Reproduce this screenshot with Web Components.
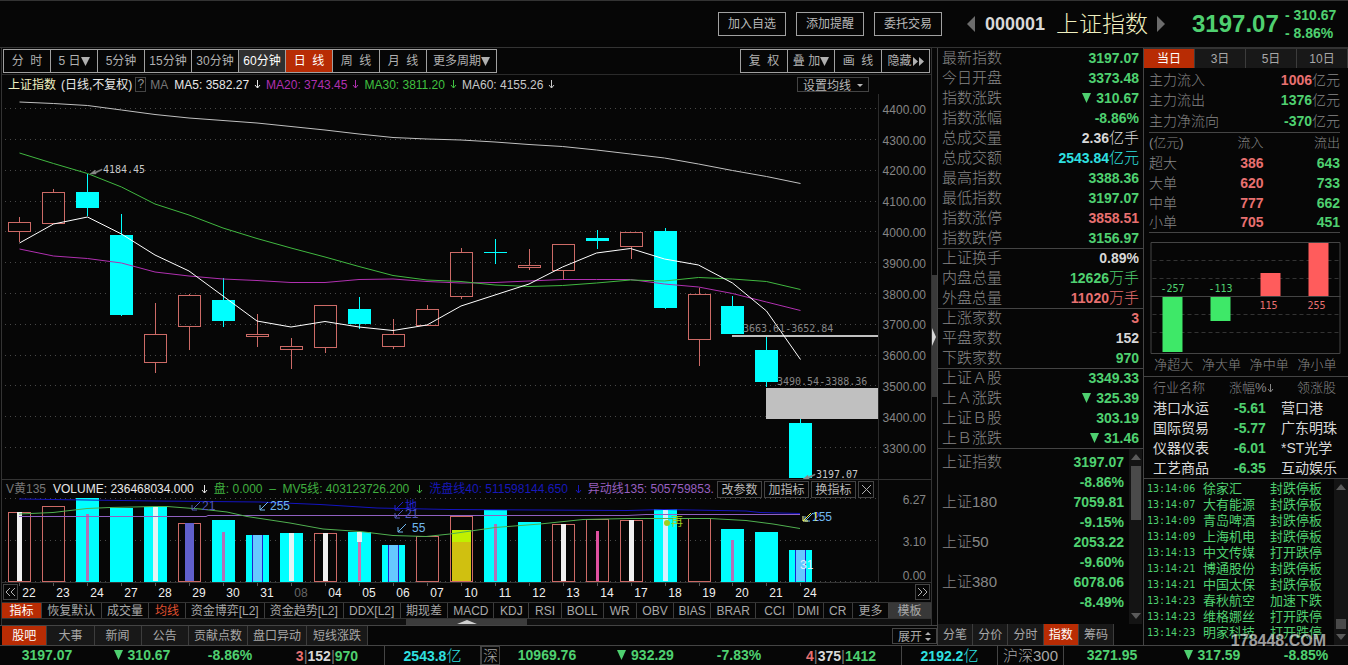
<!DOCTYPE html>
<html lang="zh-CN">
<head>
<meta charset="utf-8">
<title>上证指数 000001</title>
<style>
html{background:#060606}
body{margin:0;background:#060606;color:#a8a8a8;font:12px/16px "Liberation Sans","Noto Sans CJK SC",sans-serif;
--line:#333;--dim:#868686;--up:#e87070;--down:#4fd070;--cyan:#2fe0e0;--hot:#b82c04;--white:#d8d8d8}
</style>
</head>
<body>
<stock-app></stock-app>
<script>
const RESET = `*{box-sizing:border-box}
button{font:inherit;color:inherit;background:none;border:0;border-radius:0;padding:0;margin:0;white-space:nowrap;line-height:16px}
table{border-collapse:collapse;border-spacing:0}td,th{padding:0;font-weight:normal;white-space:nowrap}
ul{list-style:none;margin:0;padding:0}b{font-weight:700}
.up{color:var(--up)}.down{color:var(--down)}.cyan{color:var(--cyan)}.flat{color:var(--white)}
svg{display:block}`;

class Widget extends HTMLElement {
  connectedCallback() {
    if (this.shadowRoot) return;
    this.attachShadow({ mode: 'open' });
    this.shadowRoot.innerHTML = `<style>${RESET}${this.css()}</style>${this.html()}`;
    this.ready();
  }
  css() { return ':host{display:block}'; }
  html() { return ''; }
  ready() {}
}

/* Outlined push button; its caption is slotted */
customElements.define('tool-button', class extends Widget {
  css() { return `:host{display:block}
    button{width:100%;height:100%;padding:0 var(--pad,0);border:1px solid var(--edge,#a0a0a0);background:var(--fill,none)}`; }
  html() { return '<button type="button"><slot></slot></button>'; }
});

/* Row of tabs; items="label:weight|..." */
customElements.define('tab-strip', class extends Widget {
  css() { return `:host{display:block}
    nav{display:flex;height:100%}
    button{flex:var(--w) 1 0;min-width:0;border-right:1px solid #3c3c3c;background:var(--tab,none);overflow:hidden}
    button.on{background:var(--hot);color:#fff}
    button.hot{color:#e05030}
    button.box{background:#383838}`; }
  html() {
    const on = this.getAttribute('active');
    return '<nav>' + this.getAttribute('items').split('|').map(s => {
      const [t, w, c] = s.split(':');
      return `<button type="button" style="--w:${w}" class="${t === on ? 'on' : c || ''}">${t}</button>`;
    }).join('') + '</nav>';
  }
});

customElements.define('top-bar', class extends Widget {
  css() { return `:host{display:flex;justify-content:flex-end;align-items:center;height:48px;padding-right:11px;
      border-top:1px solid #333;border-bottom:1px solid var(--line)}
    .acts{display:flex;gap:10px;margin-right:25px;color:#b8b8b8}
    tool-button{width:68px;height:24px}
    .pick{display:flex;align-items:center}
    .pick svg{fill:#6c6c6c}
    b{font-size:18px;margin:0 11px 0 10px;color:#d8d8d8}
    h1{font-weight:300;font-size:23px;line-height:32px;margin:0 9px 0 0;color:#f0f0c0}
    strong{font-size:24px;margin:0 7px 0 27px;color:var(--down);width:86px}
    .chg{font:bold 14px/18px "Liberation Sans";color:var(--down);width:52px;white-space:nowrap}`; }
  html() { return `<div class="acts"><tool-button>加入自选</tool-button><tool-button>添加提醒</tool-button><tool-button>委托交易</tool-button></div>
    <div class="pick"><button type="button" aria-label="上一只"><svg width="8" height="16"><path d="M8 0v16L0 8z"/></svg></button><b>000001</b>
    <h1>上证指数</h1><button type="button" aria-label="下一只"><svg width="8" height="16"><path d="M0 0v16l8-8z"/></svg></button></div>
    <strong>3197.07</strong><div class="chg">- 310.67<br>- 8.86%</div>`; }
});

customElements.define('period-bar', class extends Widget {
  css() { return `:host{display:flex;justify-content:space-between;height:27px;padding:1px 1px 1px 1px;border-bottom:1px solid #2a2a2a;color:#b0b0b0}
    div{display:flex;border:1px solid #a0a0a0}
    button{width:47px;border-right:1px solid #a0a0a0;white-space:pre}
    button:last-child{border-right:0}
    .wide{width:69px}.on{background:var(--hot);color:#fff}.hover{background:#303030;color:#fff}
    svg{display:inline-block;fill:currentColor;vertical-align:-1px}`; }
  html() {
    const d = '<svg width="9" height="9"><path d="M0 0h9L4.500 9z"/></svg>';
    return `<div><button>分  时</button><button>5 日${d}</button><button>5分钟</button><button>15分钟</button><button>30分钟</button><button class="hover">60分钟</button><button class="on">日  线</button><button>周  线</button><button>月  线</button><button class="wide">更多周期${d}</button></div>
    <div><button>复  权</button><button>叠 加${d}</button><button>画  线</button><button>隐藏<svg width="12" height="9"><path d="M1 0l5 4.500-5 4.500zM7 0l5 4.500-5 4.500z"/></svg></button></div>`;
  }
});

const ARROW = '<svg class="ar" width="7" height="9" fill="none" stroke="currentColor"><path d="M3.500 0v8M1 5l2.500 3L6 5"/></svg>';

customElements.define('ma-legend', class extends Widget {
  css() { return `:host{display:flex;align-items:center;height:19px;padding-left:6px;color:#e8e8e8;white-space:nowrap}
    .ar{margin:0 5px}
    .name{color:#f0f0c0;margin-right:5px}.q{border:1px solid #444;width:11px;line-height:13px;text-align:center;margin:0 4px 0 3px;color:#999}
    .g{color:#777;margin-right:6px}.m{color:#b030b0}.n{color:#40c040}.l{color:#c8c8c8}
    tool-button{--edge:#444;width:72px;height:15px;margin:0 62px 0 auto;color:#b8b8b8}
    tool-button svg{display:inline-block;margin-left:6px;fill:currentColor;vertical-align:3px}`; }
  html() { return `<span class="name">上证指数</span><span>(日线,不复权)</span><span class="q">?</span><span class="g">MA</span>
    <span>MA5: 3582.27</span>${ARROW}<span class="m">MA20: 3743.45</span><span class="m">${ARROW}</span><span class="n">MA30: 3811.20</span><span class="n">${ARROW}</span><span class="l">MA60: 4155.26</span><span class="l">${ARROW}</span>
    <tool-button>设置均线<svg width="6" height="3"><path d="M0 0h6L3 3z"/></svg></tool-button>`; }
});

/* Base for plots which redraw for the size they get. Data is kept on a 930-wide design grid that starts at 2. */
class Plot extends Widget {
  html() { return '<svg width="100%" height="100%"></svg>'; }
  ready() {
    this.svg = this.shadowRoot.querySelector('svg');
    new ResizeObserver(() => this.redraw()).observe(this);
    this.redraw();
  }
  redraw() {
    const W = this.clientWidth || this.baseW, H = this.clientHeight || this.baseH;
    this.W = W; this.H = H; this.kx = W / this.baseW; this.ky = H / this.baseH;
    this.svg.innerHTML = this.draw();
  }
  get baseW() { return 929; }
  get left() { return 2; }
  X(v) { return Math.round((v - this.left) * this.kx * 2) / 2; }
  Y(v) { return Math.round((v - this.top) * this.ky * 2) / 2; }
  slot(i) { return Math.round((19.4 + 33.957 * i - this.left) * this.kx); }
  rect(x, y, w, h, a) { return `<rect x="${x}" y="${y}" width="${w}" height="${h}" ${a}/>`; }
  seg(x1, y1, x2, y2, a) { return `<path d="M${x1} ${y1}L${x2} ${y2}" ${a}/>`; }
  poly(pts, c) { return `<polyline fill="none" stroke="${c}" points="${pts.map(p => this.X(p[0]) + ',' + this.Y(p[1])).join(' ')}"/>`; }
  txt(x, y, s, a) { return `<text x="${this.X(x)}" y="${this.Y(y)}" ${a}>${s}</text>`; }
  grid(y) { return `<path d="M${this.X(5)} ${Math.floor(this.Y(y)) + .5}H${this.X(878)}" stroke="#484848" stroke-dasharray="1 4"/>`; }
}

const RED = '#cc6a66', CY = '#00ffff';
/* r = rising (hollow), f = falling (filled): body top, body bottom, high, low */
const CANDLES = [
['r',222,231,217,242],['r',192,223,189,223],['f',192,208,174,216],['f',235,315,214,316],['r',334,362,303,373],['r',295,326,294,350],
['f',300,321,278,327],['r',334,336,314,347],['r',346,349,338,369],['r',305,347,305,353],['f',309,324,297,329],['r',334,346,319,349],
['r',309,325,305,326],['r',252,296,248,299],['f',252,253,239,264],['r',265,267,249,270],['r',244,270,244,279],['f',238,241,230,249],
['r',232,246,232,259],['f',231,308,228,309],['r',294,339,288,366],['f',306,334,296,334],['f',350,382,337,387],['f',423,478,419,478]];
const MA = {
'#b030b0':[249,256,258.5,263,272,276,279,280.5,282.5,282.5,279.5,279,281.5,283,282.5,281,279.5,279.5,279.5,284,287,293.5,302,310.5],
'#40b840':[153,163.5,173.5,187,204,215,228,238.5,248,257,266.5,275.5,280,281.5,285,286.5,285.5,283,280,281,277.5,279,281.5,289.5],
'#c0c0c0':[102,103.5,105.5,110,114.5,118,120.5,123,126.5,130,134,137.5,139,140,142,144.5,146.5,150,154,158,164,170.5,176.5,183.5],
'#ffffff':[243,224,217,234,255,271,296,321,327,321.5,327,330.5,325,306,295,284,267,253,248.5,259,265,283,311,359.5]};

customElements.define('candle-chart', class extends Plot {
  get baseH() { return 385; }
  get top() { return 94; }
  css() { return `:host{display:block;min-height:300px;overflow:hidden}text{font-size:12px;fill:#858585}.m{font:10px "DejaVu Sans Mono"}`; }
  draw() {
    let s = '';
    for (let i = 0; i < 12; i++) {
      const y = 108.5 + i * 30.8;
      s += this.grid(y) + this.txt(926, y + 5, (4400 - i * 100) + '.00', 'text-anchor="end"');
    }
    s += this.seg(this.X(878) + .5, 0, this.X(878) + .5, this.H, 'stroke="#2c2c2c"');
    s += this.rect(this.X(732), this.Y(335), this.X(878) - this.X(732), 2, 'fill="#c0c0c0"');
    s += this.rect(this.X(766), this.Y(388), this.X(878) - this.X(766), this.Y(419) - this.Y(388), 'fill="#c0c0c0"');
    CANDLES.forEach(([k, a, b, hi, lo], i) => {
      const x = this.slot(i), A = Math.round(this.Y(a)), B = Math.round(this.Y(b)), H = this.Y(hi), L = this.Y(lo), c = k === 'r' ? RED : CY;
      if (H < A) s += this.seg(x + .5, H, x + .5, A, `stroke="${c}"`);
      if (L > B) s += this.seg(x + .5, B, x + .5, L, `stroke="${c}"`);
      s += k === 'r' ? this.rect(x - 10.5, A + .5, 22, B - A, `fill="none" stroke="${c}"`) : this.rect(x - 11, A, 23, Math.max(1, B - A), `fill="${c}"`);
    });
    for (const c in MA) s += this.poly(MA[c].map((y, i) => [19.4 + 33.957 * i, y]), c);
    s += this.txt(103, 173, '4184.45', 'class="m" style="fill:#c8c8c8"') + this.txt(743, 332, '3663.61-3652.84', 'class="m"')
      + this.txt(777, 385, '3490.54-3388.36', 'class="m"') + this.txt(816, 478, '3197.07', 'class="m" style="fill:#c8c8c8"');
    const tip = (x, y) => `<path transform="translate(${this.X(x)} ${this.Y(y)})" d="M0 5l5-4v2l7-3v1L6 4v1z" fill="#888" stroke="#888" stroke-width=".5"/>`;
    return s + tip(90, 169) + tip(803, 474);
  }
});

/* kind, top, centre colour, centre width, centre top */
const VOLS = [
['r',512,'#f0f0f0',5,512],['r',506],['f',498,'#b070b8',3,514],['f',508],['f',507,'#e0f4f4',5,507],['r',523,'#6060cc',9,523],
['f',520,'#b070b8',3,532],['f',535,'#66c8ff',9,535,1],['f',533,'#e0f4f4',5,533],['r',533,'#f0f0f0',5,533],['f',532,'#d070b0',3,542],['f',545,'#66c8ff',9,545,1],
['r',536],['r',516,'#d0c010',19,530],['f',510,'#b070b8',3,524],['f',522],['r',524,'#f0f0f0',5,524],['r',519,'#e050a0',3,531],
['r',520,'#f0f0f0',5,520],['f',509,'#d8f0ff',5,509],['r',518],['f',529,'#b070b8',3,540],['f',532],['f',550,'#66c8ff',9,550,1]];

customElements.define('volume-chart', class extends Plot {
  get baseH() { return 84; }
  get top() { return 498; }
  css() { return `:host{display:block;height:84px}svg{overflow:visible}text{font-size:12px;fill:#858585}`; }
  draw() {
    let s = '';
    [498, 540, 581].forEach(y => s += this.grid(y));
    [['6.27', 504], ['3.10', 546], ['0.00', 580]].forEach(([t, y]) => s += this.txt(926, y, t, 'text-anchor="end"'));
    s += this.seg(this.X(878) + .5, -18, this.X(878) + .5, this.H, 'stroke="#2c2c2c"');
    const b = this.Y(582);
    VOLS.forEach(([k, t, c, w, ct, edge], i) => {
      const x = this.slot(i), y = this.Y(t);
      s += k === 'r' ? this.rect(x - 10.5, y + .5, 22, b - y - 1, `fill="none" stroke="${RED}"`) : this.rect(x - 11, y, 23, b - y, `fill="${CY}"`);
      if (i === 10) s += this.rect(x - 2, y, 5, 10, 'fill="#e0f4f4"');
      if (c) s += this.rect(x - (w - 1) / 2, this.Y(ct), w, b - this.Y(ct) - 1, `fill="${c}"`);
      if (i === 13) s += this.rect(x - 9, this.Y(530), 19, 12, 'fill="#c0f000"');
      if (edge) s += this.rect(x - 5, y, 1, b - y, 'fill="#2020d0"') + this.rect(x + 5, y, 1, b - y, 'fill="#2020d0"');
    });
    s += this.poly([[19,499],[155,501],[260,502],[320,504.5],[377,508],[450,509.5],[627,510.5],[664,509.5],[746,511],[760,512.5],[800,513.5]], '#1414c0');
    s += this.poly([[19,516.5],[206,516.5],[208,515.5],[627,515.5],[646,514.5],[800,514.5]], '#9060c0');
    s += this.poly([[19,514],[53,512.5],[87,508.5],[110,507.5],[155,506.5],[167,506.5],[200,509],[227,512],[247,516.5],[290,523],[323,529],[360,531.5],[393,535.5],[426,536.5],[450,534],[495,527.5],[540,524],[583,519.5],[630,518.5],[710,518.5],[746,520.5],[773,524],[800,528.5]], '#50b050');
    const tag = (x, y, t, c, gap = 11) => `<path transform="translate(${this.X(x)} ${this.Y(y)})" d="M9 0L1 8M1 3v5h5" fill="none" stroke="${c}"/>` + this.txt(x + gap, y + 8, t, `style="fill:${c}"`);
    s += tag(191, 502, '21', '#5058b8') + tag(259, 502, '255', '#70b8f0') + tag(394, 502, '地', '#2020c8') + tag(394, 510, '21', '#5058b8')
      + tag(397, 524, '55', '#70b8f0', 15) + tag(802, 513, '2', '#2848e0') + tag(804, 513, '155', '#70b8f0', 8)
      + tag(802, 513, '!', '#f0f040', 12);
    s += `<circle cx="${this.X(667)}" cy="${this.Y(523)}" r="3" fill="#a0d020"/>` + this.txt(671, 526, '再', 'style="fill:#a0d020"')
      + this.txt(800, 569, '31', 'style="fill:#e0f0ff"');
    return s;
  }
});

customElements.define('volume-legend', class extends Widget {
  css() { return `:host{display:flex;align-items:center;height:19px;padding:0 57px 0 4px;border-top:1px solid #333;color:#e8e8e8;white-space:nowrap}
    .ar{margin:0 6px 0 7px}.g{color:#777;margin-right:7px}.n{color:#40b040}.b{color:#1818b8}
    .p{color:#9860c0;overflow:hidden;flex:1 1 0;min-width:0}
    div{display:flex;gap:2px;color:#b8b8b8}tool-button{--edge:#444;height:17px;width:45px}.x{width:16px}`; }
  html() { return `<span class="g">V黄135</span><span>VOLUME: 236468034.000</span>${ARROW}<span class="n">盘: 0.000 &#160;–&#160; MV5线: 403123726.200</span><span class="n">${ARROW}</span>
    <span class="b">洗盘线40: 511598144.650</span><span class="b">${ARROW}</span><span class="p">异动线135: 505759853.</span>
    <div><tool-button>改参数</tool-button><tool-button>加指标</tool-button><tool-button>换指标</tool-button><tool-button class="x"><svg width="11" height="11" stroke="#b0b0b0" fill="none" style="margin:auto"><path d="M1 1l9 9M10 1l-9 9"/></svg></tool-button></div>`; }
});

customElements.define('date-labels', class extends Plot {
  get baseH() { return 20; }
  get baseW() { return 897; }
  get left() { return 18; }
  get top() { return 583; }
  css() { return ':host{display:block;flex:1;min-width:0;height:20px}svg{overflow:visible}text{font-size:12px;fill:#f0f0f0}'; }
  draw() {
    return '22 23 24 27 28 29 30 31 08 04 05 06 07 10 11 12 13 14 17 18 19 20 21 24'.split(' ').map((d, i) => {
      const x = this.slot(i);
      return `<path d="M${x + .5} 0v3" stroke="#555"/><text x="${x + 10}" y="14" text-anchor="middle" ${d === '08' ? 'style="fill:#666"' : ''}>${d}</text>`;
    }).join('');
  }
});

customElements.define('date-axis', class extends Widget {
  css() { return `:host{display:flex;height:20px;padding:0 1px;border-top:1px solid #333}
    button{width:15px;height:16px;margin-top:1px;border:1px solid #444;flex:none}
    svg{margin:auto;fill:none;stroke:#b0b0b0}`; }
  html() { return `<button type="button" aria-label="向前"><svg width="11" height="9"><path d="M5 0L1 4l4 4M10 0L6 4l4 4"/></svg></button><date-labels></date-labels><button type="button" aria-label="向后"><svg width="11" height="9"><path d="M1 0l4 4-4 4M6 0l4 4-4 4"/></svg></button>`; }
});

customElements.define('quote-table', class extends Widget {
  css() { return `:host{display:block}
    table{width:100%}tr{height:20px}tr.cut{border-top:1px solid #444}
    th{text-align:left;padding-left:4px;font-size:15px;font-weight:300;color:var(--dim)}
    td{text-align:right;padding-right:4px;font-size:15px;font-weight:300}b{font-size:14px}
    svg{display:inline-block;fill:currentColor;margin-right:5px}`; }
  html() {
    const rows = [['最新指数','3197.07','down'],['今日开盘','3373.48','down'],['指数涨跌','v310.67','down'],['指数涨幅','-8.86%','down'],['总成交量','2.36','flat','亿手'],
    ['总成交额','2543.84','cyan','亿元'],['最高指数','3388.36','down'],['最低指数','3197.07','down'],['指数涨停','3858.51','up'],['指数跌停','3156.97','down'],
    ['上证换手','0.89%','flat','',1],['内盘总量','12626','down','万手'],['外盘总量','11020','up','万手'],['上涨家数','3','up','',1],['平盘家数','152','flat'],['下跌家数','970','down'],
    ['上证Ａ股','3349.33','down','',1],['上Ａ涨跌','v325.39','down'],['上证Ｂ股','303.19','down'],['上Ｂ涨跌','v31.46','down']];
    return '<table>' + rows.map(([n, v, c, u = '', cut]) => `<tr class="${cut ? 'cut' : ''}"><th scope="row">${n}</th><td class="${c}">${
      v[0] === 'v' ? '<svg width="9" height="10"><path d="M0 0h9L4.500 10z"/></svg>' : ''}<b>${v.replace('v', '')}</b>${u}</td></tr>`).join('') + '</table>';
  }
});

/* Thin scroll bar: arrows and a thumb; the custom properties share out the track */
customElements.define('side-scroll', class extends Widget {
  css() { return `:host{display:flex;flex-direction:column;width:13px;background:#141414;align-items:center}
    svg{fill:#5a5a5a;margin:5px 0;flex:none}.track{flex:1;width:10px;display:flex;flex-direction:column}
    .track::before{content:"";flex:var(--above)}.track::after{content:"";flex:var(--below)}i{flex:var(--size);background:#4a4a4a}`; }
  html() { return '<svg width="10" height="6"><path d="M0 6h10L5 0z"/></svg><div class="track"><i></i></div><svg width="10" height="6"><path d="M0 0h10L5 6z"/></svg>'; }
});

customElements.define('index-list', class extends Widget {
  css() { return `:host{display:flex;border-top:1px solid #444;height:176px}
    table{flex:1;margin-top:3px;align-self:flex-start}tr{height:20px}
    th{text-align:left;padding-left:4px;font-size:15px;font-weight:300;color:var(--dim)}
    td{text-align:right;padding-right:5px;font-weight:bold;font-size:14px;color:var(--down)}
    side-scroll{margin-right:1px;--above:1;--size:56;--below:90}`; }
  html() { return '<table>' + [['上证指数','3197.07','-8.86%'],['上证180','7059.81','-9.15%'],['上证50','2053.22','-9.60%'],['上证380','6078.06','-8.49%']]
    .map(r => `<tr><th scope="row">${r[0]}</th><td>${r[1]}</td></tr><tr><td></td><td>${r[2]}</td></tr>`).join('') + '</table><side-scroll></side-scroll>'; }
});

customElements.define('flow-panel', class extends Widget {
  css() { return `:host{display:block;padding:0 8px 0 5px}
    table{width:100%;font-size:14px;color:var(--dim);font-weight:300}tr{height:20px}th{text-align:left;font-weight:300}td{text-align:right;font-weight:300}
    .sum{border-bottom:1px solid #444;margin-top:2px}.sum tr:last-child{height:22px}
    .size{border-bottom:1px solid #444;table-layout:fixed}
    .size th:nth-child(1){width:40%}.size th:nth-child(2),.size th:nth-child(3){text-align:right}.size th:nth-child(2){width:20%}
    thead{font-size:13px}b{font-weight:bold}`; }
  html() { return `<table class="sum"><tr><th scope="row">主力流入</th><td><b class="up">1006</b>亿元</td></tr><tr><th scope="row">主力流出</th><td><b class="down">1376</b>亿元</td></tr><tr><th scope="row">主力净流向</th><td><b class="down">-370</b>亿元</td></tr></table>
    <table class="size"><thead><tr><th>(亿元)</th><th>流入</th><th>流出</th></tr></thead><tbody>${
    [['超大',386,643],['大单',620,733],['中单',777,662],['小单',705,451]].map(r => `<tr><th scope="row">${r[0]}</th><td class="up"><b>${r[1]}</b></td><td class="down"><b>${r[2]}</b></td></tr>`).join('')}</tbody></table>`; }
});

customElements.define('flow-bars', class extends Widget {
  css() { return `:host{display:block;padding:9px 7px 0 6px;border-bottom:1px solid #444}
    text{font:10px "DejaVu Sans Mono";text-anchor:middle}
    ul{display:flex;justify-content:space-around;height:22px;align-items:center;font-size:13px;font-weight:300;color:var(--dim)}`; }
  html() { return `<svg width="100%" height="112" viewBox="0 0 190 112"><path d="M.5 .5h189v111H.5zM0 54.500h190" fill="none" stroke="#444"/>
    <path d="M2 18.500h186M2 36.500h186M2 72.500h186M2 90.500h186" stroke="#333" stroke-dasharray="4 3"/>
    <path d="M12 55h20v55H12zM60 55h20v24H60z" fill="#3ee868"/><path d="M110 31h20v23h-20zM158 1h20v53h-20z" fill="#ff5c5c"/>
    <text x="22" y="50" fill="#4fd070">-257</text><text x="70" y="50" fill="#4fd070">-113</text><text x="118" y="67" fill="#e87070">115</text><text x="166" y="67" fill="#e87070">255</text></svg>
    <ul><li>净超大</li><li>净大单</li><li>净中单</li><li>净小单</li></ul>`; }
});

customElements.define('sector-table', class extends Widget {
  css() { return `:host{display:block;padding:0 2px 0 9px;border-bottom:1px solid #444}
    table{width:100%;table-layout:fixed;font-size:14px;color:var(--white)}tr{height:20px}
    thead{font-size:13px;color:var(--dim)}th{font-weight:300;text-align:left}thead tr{height:21px}
    th:nth-child(1){width:68px}th:nth-child(2){width:60px;padding-left:8px}th:nth-child(3){text-align:right;padding-right:10px}
    td:nth-child(2){padding-left:13px;color:var(--down);font-weight:bold}.ar{display:inline-block;vertical-align:-1px}`; }
  html() { return `<table><thead><tr><th>行业名称</th><th>涨幅%${ARROW}</th><th>领涨股</th></tr></thead><tbody>${
    [['港口水运','-5.61','营口港'],['国际贸易','-5.77','广东明珠'],['仪器仪表','-6.01','*ST光学'],['工艺商品','-6.35','互动娱乐']].map(r => `<tr><td>${r[0]}</td><td>${r[1]}</td><td>${r[2]}</td></tr>`).join('')}</tbody></table>`; }
});

customElements.define('news-feed', class extends Widget {
  css() { return `:host{display:flex;justify-content:space-between;flex:1}
    table{font-size:13px;color:var(--down);margin:1px 0 0 3px;align-self:flex-start}tr{height:16px}td{line-height:15px}
    td:nth-child(1){font:10px/15px "DejaVu Sans Mono";width:56px}td:nth-child(2){width:67px}
    side-scroll{width:14px;--above:12;--size:1;--below:0}`; }
  html() { return '<table>' + [['06','徐家汇','封跌停板'],['07','大有能源','封跌停板'],['09','青岛啤酒','封跌停板'],['09','上海机电','封跌停板'],['13','中文传媒','打开跌停'],
    ['21','博通股份','封跌停板'],['21','中国太保','封跌停板'],['23','春秋航空','加速下跌'],['23','维格娜丝','打开跌停'],['23','明家科技','打开跌停']]
    .map(r => `<tr><td>13:14:${r[0]}</td><td>${r[1]}</td><td>${r[2]}</td></tr>`).join('') + '</table><side-scroll></side-scroll>'; }
});

customElements.define('market-ticker', class extends Widget {
  css() { return `:host{display:grid;height:20px;border-top:1px solid #444;grid-template-columns:94fr 96fr 80fr 115fr 96fr 19fr 94fr 103fr 84fr 121fr 96fr 66fr 96fr 104fr 84fr;align-items:center;justify-items:center;font-size:15px;font-weight:300;white-space:nowrap;line-height:19px}
    b{font-size:14px}.e{width:100%;text-align:center;border-right:1px solid #444;height:19px}
    .box{border:1px solid #444;line-height:17px}svg{display:inline-block;fill:currentColor;margin-right:5px}i{color:#777;font-style:normal}`; }
  html() {
    const v = '<svg width="9" height="10"><path d="M0 0h9L4.500 10z"/></svg>';
    return `<b class="down">3197.07</b><b class="down">${v}310.67</b><b class="down">-8.86%</b><div class="e"><b class="up">3</b><i>|</i><b class="flat">152</b><i>|</i><b class="down">970</b></div>
    <div class="e cyan"><b>2543.8</b>亿</div><div class="e box">深</div>
    <b class="down">10969.76</b><b class="down">${v}932.29</b><b class="down">-7.83%</b><div class="e"><b class="up">4</b><i>|</i><b class="flat">375</b><i>|</i><b class="down">1412</b></div>
    <div class="e cyan"><b>2192.2</b>亿</div><div class="e">沪深300</div>
    <b class="down">3271.95</b><b class="down">${v}317.59</b><b class="down">-8.85%</b>`;
  }
});

customElements.define('stock-app', class extends Widget {
  css() { return `:host{display:flex;flex-direction:column;min-height:100vh;position:relative}
    main{flex:1;display:grid;grid-template-columns:minmax(0,1fr) 206px 205px}
    .left{display:grid;grid-template-columns:2px minmax(0,1fr) 5px;grid-template-rows:1fr 20px}
    .chart{grid-column:2;display:flex;flex-direction:column;border-right:1px solid #333;border-left:1px solid #333;margin-left:-1px}
    candle-chart{flex:1}
    .grip{background:linear-gradient(#3a3a3a,#3a3a3a) 0 227px/5px 122px no-repeat;display:flex;align-items:center}
    .ind{height:17px;border-top:1px solid #333;border-bottom:1px solid #333}
    .slide{height:6px;background:#101010;display:flex;justify-content:center}.slide i{width:121px;background:#3c3c3c;text-align:center}
    .slide svg{margin:1px auto 0}
    .foot{grid-column:1/-1;display:flex;justify-content:space-between;border-top:1px solid #444;padding-left:2px}
    .foot tab-strip{width:366px;--tab:#181818}.foot tool-button{width:45px;height:16px;margin-top:2px;--edge:#444}
    .foot tool-button svg{display:inline-block;margin-left:3px;fill:#b0b0b0}
    .mid,.right{border-left:1px solid #444;display:flex;flex-direction:column}
    .mid tab-strip{height:21px;width:176px;--tab:#181818}
    .mid{font-size:12px}
    .days{height:20px;--tab:#181818;border-top:1px solid #333;font-size:12px}
    .mark{position:absolute;right:22px;bottom:12px;font:bold 16px/24px "Liberation Sans",sans-serif;color:#fff;opacity:.6;text-shadow:1px 1px 1px #000,-1px -1px 1px #000}`; }
  html() { return `<top-bar></top-bar>
    <main>
      <section class="left">
        <div class="chart"><period-bar></period-bar><ma-legend></ma-legend><candle-chart></candle-chart>
          <volume-legend></volume-legend><volume-chart></volume-chart><date-axis></date-axis>
          <tab-strip class="ind" active="指标" items="指标:40|恢复默认:60|成交量:48|均线:36:hot|资金博弈[L2]:80|资金趋势[L2]:80|DDX[L2]:57|期现差:48|MACD:46|KDJ:35|RSI:32|BOLL:42|WR:33|OBV:37|BIAS:37|BRAR:45|CCI:38|DMI:29|CR:29|更多:36|模板:42:box"></tab-strip>
          <div class="slide"><i><svg width="20" height="5"><path d="M0 4h20L10 0z" fill="#d0d0d0"/></svg></i></div></div>
        <div class="grip"><svg width="4" height="18"><path d="M0 0l4 9-4 9z" fill="#d8d8d8"/></svg></div>
        <div class="foot"><tab-strip active="股吧" items="股吧:45|大事:47|新闻:47|公告:47|贡献点数:59|盘口异动:59|短线涨跌:61"></tab-strip>
          <tool-button>展开<svg width="6" height="9"><path d="M0 3h6L3 0zM0 6h6L3 9z"/></svg></tool-button></div>
      </section>
      <section class="mid"><quote-table></quote-table><index-list></index-list>
        <tab-strip active="指数" items="分笔:1|分价:1|分时:1|指数:1|筹码:1"></tab-strip></section>
      <section class="right"><tab-strip class="days" active="当日" items="当日:1|3日:1|5日:1|10日:1"></tab-strip>
        <flow-panel></flow-panel><flow-bars></flow-bars><sector-table></sector-table><news-feed></news-feed></section>
    </main>
    <market-ticker></market-ticker>
    <div class="mark">178448.COM</div>`; }
});
</script>
</body>
</html>
